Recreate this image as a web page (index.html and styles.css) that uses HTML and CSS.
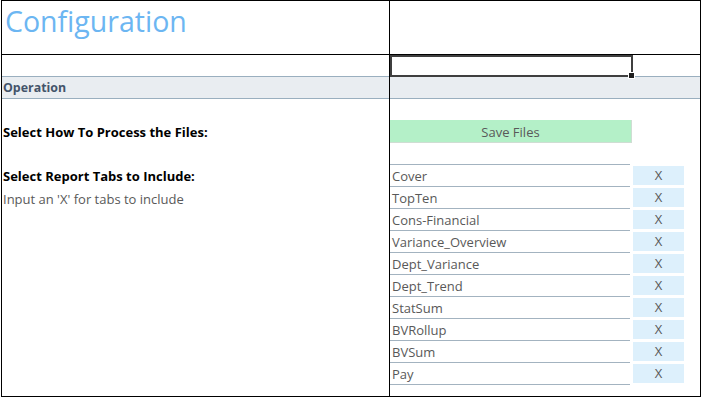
FILE: index.html
```html
<!DOCTYPE html>
<html lang="en">
<head>
  <meta charset="UTF-8" />
  <meta name="viewport" content="width=device-width, initial-scale=1.0"/>
  <title>Configuration</title>
  <link rel="stylesheet" href="styles.css">
</head>
<body>
  <div class="sheet">
    <!-- Left column: labels -->
    <div class="col col-left">
      <div class="title-cell"><h1 class="title">Configuration</h1></div>
      <div class="blank"></div>
      <div class="band"><span class="band-label">Operation</span></div>
      <div class="blank"></div>
      <div class="label-row label-process">Select How To Process the Files:</div>
      <div class="blank blank-lower"></div>
      <div class="label-row label-tabs">Select Report Tabs to Include:</div>
      <div class="note-row">Input an 'X' for tabs to include</div>
    </div>

    <!-- Right column: inputs -->
    <div class="col col-right">
      <div class="title-cell"></div>
      <div class="blank active-row">
        <div class="selection"><span class="fill-handle"></span></div>
      </div>
      <div class="band"></div>
      <div class="blank"></div>
      <div class="save-btn">Save Files</div>
      <div class="tabs-head"></div>

      <div class="tab-row"><div class="tab-name">Cover</div><div class="tab-x">X</div></div>
      <div class="tab-row"><div class="tab-name">TopTen</div><div class="tab-x">X</div></div>
      <div class="tab-row"><div class="tab-name">Cons-Financial</div><div class="tab-x">X</div></div>
      <div class="tab-row"><div class="tab-name">Variance_Overview</div><div class="tab-x">X</div></div>
      <div class="tab-row"><div class="tab-name">Dept_Variance</div><div class="tab-x">X</div></div>
      <div class="tab-row"><div class="tab-name">Dept_Trend</div><div class="tab-x">X</div></div>
      <div class="tab-row"><div class="tab-name">StatSum</div><div class="tab-x">X</div></div>
      <div class="tab-row"><div class="tab-name">BVRollup</div><div class="tab-x">X</div></div>
      <div class="tab-row"><div class="tab-name">BVSum</div><div class="tab-x">X</div></div>
      <div class="tab-row"><div class="tab-name">Pay</div><div class="tab-x">X</div></div>
    </div>
  </div>
</body>
</html>
```

FILE: styles.css
```css
:root {
  --grid-black: #000000;
  --title-blue: #6CB6F2;
  --band-fill: #E9EDF1;
  --band-line: #9AAFBF;
  --row-line: #A3B3C0;
  --text-grey: #595959;
  --heading-grey: #44546A;
  --save-green: #B4F0C8;
  --x-blue: #DDF0FC;
  --font-stack: 'Open Sans', 'Noto Sans', sans-serif;
}

body {
  margin: 0;
  background: #FFFFFF;
  font-family: var(--font-stack);
  overflow: hidden;
}

.sheet {
  display: flex;
  margin-left: 1px;
  width: 700px;
  height: 397px;
  box-sizing: border-box;
  border: 1px solid var(--grid-black);
}

.col {
  display: flex;
  flex-direction: column;
}

.col-left {
  width: 388px;
  border-right: 1px solid var(--grid-black);
  box-sizing: border-box;
}

.col-right {
  width: 310px;
}

.title-cell {
  height: 53px;
  border-bottom: 1px solid var(--grid-black);
  flex-shrink: 0;
}

.title {
  margin: 0;
  padding-left: 3px;
  font-size: 28.5px;
  font-weight: 400;
  line-height: 41px;
  color: var(--title-blue);
}

.blank {
  height: 21px;
  flex-shrink: 0;
}

.blank-lower {
  height: 22px;
}

.band {
  height: 21px;
  background: var(--band-fill);
  border-top: 1px solid var(--band-line);
  border-bottom: 1px solid var(--band-line);
  flex-shrink: 0;
}

.band-label {
  display: block;
  padding-left: 1px;
  font-size: 12.4px;
  font-weight: 700;
  line-height: 22px;
  color: var(--heading-grey);
}

.label-row {
  height: 23px;
  padding-left: 1px;
  font-size: 13px;
  font-weight: 700;
  line-height: 25px;
  color: #000000;
  flex-shrink: 0;
}

.label-tabs {
  height: 22px;
  line-height: 22px;
}

.note-row {
  height: 22px;
  padding-left: 1px;
  font-size: 13px;
  line-height: 24px;
  color: var(--text-grey);
}

/* active cell outline */
.active-row {
  position: relative;
}

.selection {
  position: absolute;
  left: 0;
  top: 0;
  width: 243px;
  height: 22px;
  box-sizing: border-box;
  border: 2px solid #3F3F3F;
  z-index: 2;
}

.fill-handle {
  position: absolute;
  right: -4px;
  bottom: -4px;
  width: 5px;
  height: 5px;
  background: #1F1F1F;
  border: 1px solid #FFFFFF;
}

.save-btn {
  width: 242px;
  height: 23px;
  box-sizing: border-box;
  background: var(--save-green);
  border-right: 1px solid #CFDDD3;
  border-bottom: 1px solid #CFDDD3;
  text-align: center;
  font-size: 13px;
  line-height: 24px;
  color: var(--text-grey);
  flex-shrink: 0;
}

.tabs-head {
  width: 240px;
  height: 21px;
  border-bottom: 1px solid var(--row-line);
  flex-shrink: 0;
}

.tab-row {
  display: flex;
  height: 22px;
  flex-shrink: 0;
}

.tab-name {
  width: 240px;
  height: 22px;
  box-sizing: border-box;
  border-bottom: 1px solid var(--row-line);
  padding-left: 2px;
  font-size: 13px;
  line-height: 23px;
  color: var(--text-grey);
}

.tab-x {
  width: 51px;
  height: 19px;
  margin-top: 1px;
  margin-left: 3px;
  background: var(--x-blue);
  text-align: center;
  font-size: 13px;
  line-height: 19px;
  color: var(--text-grey);
}
```
